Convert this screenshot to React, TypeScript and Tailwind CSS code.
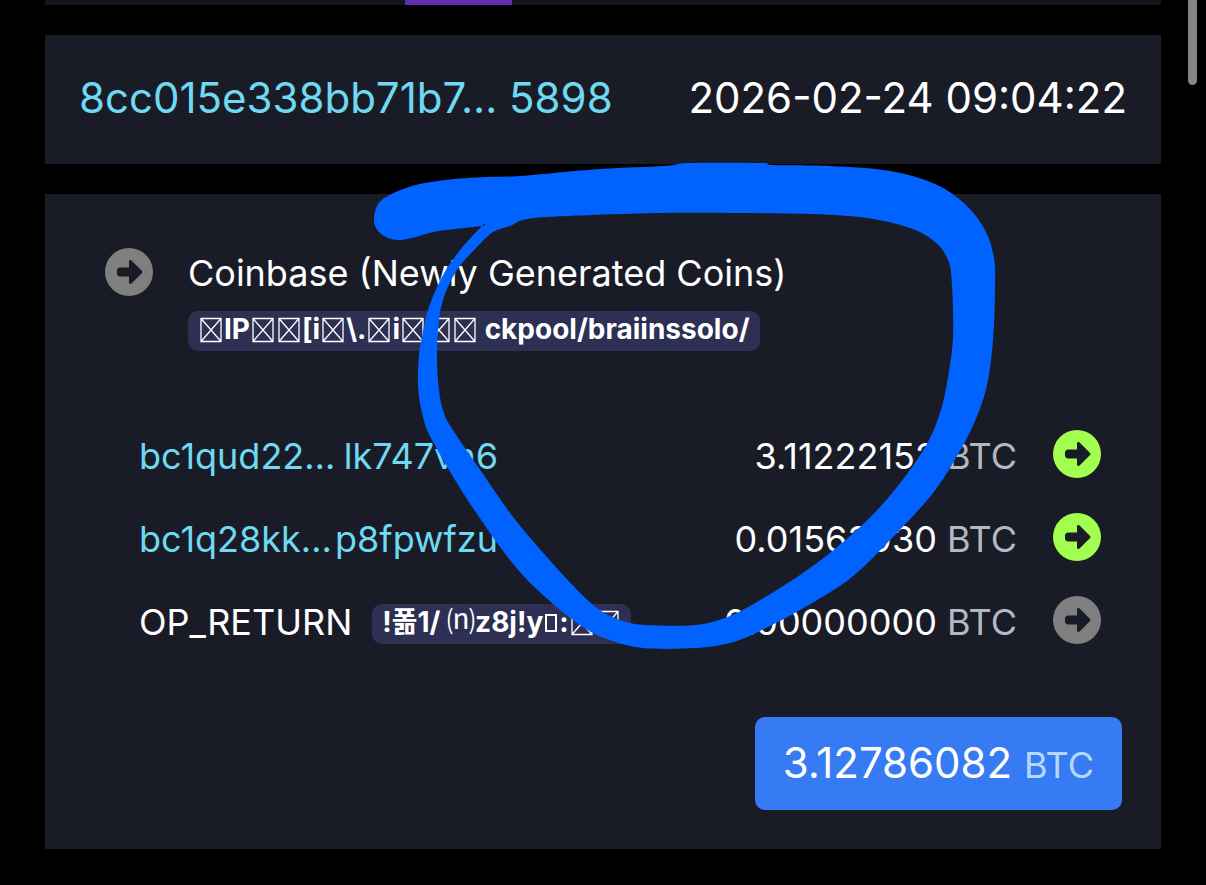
import React from 'react';
import { FaCircleRight } from 'react-icons/fa6';

type Point = [number, number];

interface Output {
  id: string;
  head: string;
  tail?: string;
  amount: string;
  spent: boolean;
}

const outputs: Output[] = [
  { id: 'pool', head: 'bc1qud22…', tail: 'lk747vn6', amount: '3.11222152', spent: true },
  { id: 'fee', head: 'bc1q28kk…', tail: 'p8fpwfzu', amount: '0.01563930', spent: true },
  { id: 'data', head: 'OP_RETURN', amount: '0.00000000', spent: false },
];

// Outline of the marker stroke, outer edge and then the hole
const strokeOuter: Point[] = [
  [374, 218], [377, 206], [386, 197], [412, 186], [445, 180], [485, 177], [520, 176], [600, 169],
  [664, 166], [690, 163], [762, 163], [772, 165], [830, 166], [890, 171], [935, 184], [965, 204],
  [985, 230], [994, 258], [995, 290], [993, 340], [987, 385], [975, 421], [957, 456], [933, 493],
  [895, 535], [852, 577], [807, 606], [760, 631], [730, 643], [695, 648], [643, 648], [607, 639],
  [580, 625], [543, 595], [510, 560], [467, 499], [432, 440], [422, 413], [418, 385], [419, 355],
  [422, 337], [428, 310], [442, 277], [460, 250], [482, 226], [482, 226], [455, 229], [433, 232],
  [412, 238], [397, 240], [384, 236], [376, 228],
];

const strokeInner: Point[] = [
  [527, 219], [567, 216], [660, 213], [740, 213], [813, 214], [867, 218], [910, 228], [935, 242],
  [948, 260], [952, 285], [953, 337], [948, 377], [940, 413], [924, 449], [893, 492], [860, 527],
  [817, 563], [767, 596], [730, 616], [695, 625], [647, 625], [623, 621], [597, 608], [565, 577],
  [517, 522], [483, 474], [451, 427], [443, 410], [439, 390], [437, 360], [438, 330], [443, 300],
  [457, 270], [477, 247], [493, 232], [510, 226],
];

const smoothPath = (points: Point[]) => {
  const n = points.length;
  let d = `M${points[0][0]} ${points[0][1]}`;
  for (let i = 0; i < n; i++) {
    const a = points[(i - 1 + n) % n];
    const b = points[i];
    const c = points[(i + 1) % n];
    const e = points[(i + 2) % n];
    d += `C${b[0] + (c[0] - a[0]) / 6} ${b[1] + (c[1] - a[1]) / 6} ${c[0] - (e[0] - b[0]) / 6} ${c[1] - (e[1] - b[1]) / 6} ${c[0]} ${c[1]}`;
  }
  return d + 'Z';
};

const Tofu: React.FC = () => (
  <svg viewBox="0 0 26 26" className="inline-block w-[26px] h-[26px] align-[-4px]" fill="none" stroke="currentColor" strokeWidth="1.3">
    <path d="M3 1.5h20v23h-20zM3 1.5l20 23M23 1.5l-20 23" />
  </svg>
);

const Badge: React.FC<{ children: React.ReactNode }> = ({ children }) => (
  <span className="inline-flex items-center h-10 px-[10px] rounded-[10px] bg-[#2d3053] text-white text-[28px] leading-9 font-bold whitespace-pre">
    <span className="pb-1">{children}</span>
  </span>
);

const App: React.FC = () => {
  return (
    <div className="relative min-h-screen overflow-hidden bg-black px-[45px] pb-9 text-white font-['Inter','Noto_Sans_CJK_KR',sans-serif]">
      <div className="h-[5px] bg-[#15151e] pl-[360px]">
        <div className="w-[107px] h-full bg-[#5f2eae]"></div>
      </div>

      {/* Transaction header */}
      <header className="mt-[30px] h-[129px] px-[34px] pb-1 flex items-center justify-between bg-[#191c27] text-[42px] leading-[48px] whitespace-nowrap">
        <a href="#tx" className="text-[#6fd9f1]">8cc015e338bb71b7… 5898</a>
        <time>2026-02-24 09:04:22</time>
      </header>

      <main className="mt-[30px] pt-[54px] pb-[39px] bg-[#191c27]">
        {/* Input */}
        <section className="flex items-start pl-[60px] gap-[35px]">
          <FaCircleRight className="w-12 h-12 text-[#7f7f7f]" />
          <div className="flex flex-col items-start">
            <p className="text-[36px] leading-[50px] whitespace-nowrap mb-[13px]">Coinbase (Newly Generated Coins)</p>
            <Badge>
              <Tofu />IP<Tofu /><Tofu />[i<Tofu />\.<Tofu />i<Tofu /><Tofu /><Tofu /> ckpool/braiinssolo/
            </Badge>
          </div>
        </section>

        {/* Outputs */}
        <table className="mt-[63px] w-full text-[36px] leading-[48px] whitespace-nowrap">
          <tbody>
            {outputs.map((output) => (
              <tr key={output.id} className="h-[83px]">
                <td className="pl-[94px]">
                  {output.tail ? (
                    <a href={`#${output.id}`} className="flex justify-between w-[359px] text-[#6fd9f1]">
                      <span>{output.head}</span>
                      <span>{output.tail}</span>
                    </a>
                  ) : (
                    <div className="flex items-center gap-5">
                      <span>{output.head}</span>
                      <div className="flex pt-1">
                        <Badge>
                          !폶1/ <span className="font-normal">⒩</span>z8j!y
                          <span className="inline-block w-3 h-[18px] mx-[2px] border-2 border-white"></span>
                          :<Tofu /><Tofu />
                        </Badge>
                      </div>
                    </div>
                  )}
                </td>
                <td className="text-right">
                  {output.amount} <span className="text-[#b5b8c3]">BTC</span>
                </td>
                <td className="w-[144px] pl-9 pb-1">
                  <FaCircleRight className={output.spent ? 'w-12 h-12 text-[#a2ff4f]' : 'w-12 h-12 text-[#7f7f7f]'} />
                </td>
              </tr>
            ))}
          </tbody>
        </table>

        <div className="flex justify-end mt-[54px] pr-[39px]">
          <button className="h-[93px] px-7 rounded-[10px] bg-[#367bf3] text-[42px] leading-[48px] whitespace-nowrap">
            3.12786082 <span className="text-[36px] text-[#b5d9fc]">BTC</span>
          </button>
        </div>
      </main>

      <div className="absolute top-0 right-[9px] w-[9px] h-[85px] rounded-b-full bg-[#858585]"></div>

      {/* Marker drawn over the page */}
      <svg className="absolute top-0 left-0 pointer-events-none" width="1206" height="885" viewBox="0 0 1206 885" aria-hidden="true">
        <path d={smoothPath(strokeOuter) + smoothPath(strokeInner)} fill="#0062ff" fillRule="evenodd" />
      </svg>
    </div>
  );
};

export default App;
